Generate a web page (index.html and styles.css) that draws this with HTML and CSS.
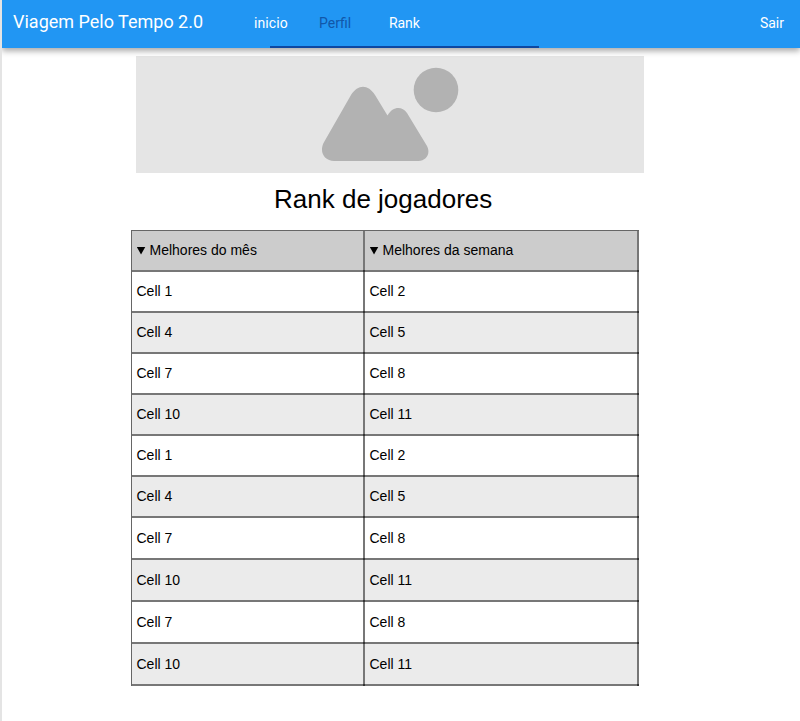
FILE: index.html
```html
<!DOCTYPE html>
<html lang="pt-BR">
<head>
<meta charset="utf-8">
<title>Viagem Pelo Tempo 2.0</title>
<link rel="stylesheet" href="styles.css">
</head>
<body>
<header class="navbar">
  <a class="brand">Viagem Pelo Tempo 2.0</a>
  <nav class="tabs">
    <a class="tab tab-home">inicio</a>
    <a class="tab tab-profile">Perfil</a>
    <a class="tab tab-rank">Rank</a>
    <span class="indicator"></span>
  </nav>
  <a class="tab logout">Sair</a>
</header>
<main class="content">
  <div class="banner">
    <svg class="picture" width="140" height="96" viewBox="0 0 140 96" fill="#b2b2b2">
      <circle cx="116" cy="24" r="22.3"/>
      <path d="M31 29C38 18 48 18 55 29L67.500 49.500C73 40 82 40 87 47L107 80C111 88 106 95 98.500 95H14C5 95-1 87 3.500 77Z"/>
    </svg>
  </div>
  <h1 class="title">Rank de jogadores</h1>
  <table class="ranking">
    <thead>
      <tr><th><div class="head"><i class="arrow"></i><span>Melhores do mês</span></div></th><th><div class="head"><i class="arrow"></i><span>Melhores da semana</span></div></th></tr>
    </thead>
    <tbody>
      <tr><td>Cell 1</td><td>Cell 2</td></tr>
      <tr><td>Cell 4</td><td>Cell 5</td></tr>
      <tr><td>Cell 7</td><td>Cell 8</td></tr>
      <tr><td>Cell 10</td><td>Cell 11</td></tr>
      <tr><td>Cell 1</td><td>Cell 2</td></tr>
      <tr><td>Cell 4</td><td>Cell 5</td></tr>
      <tr class="tall"><td>Cell 7</td><td>Cell 8</td></tr>
      <tr class="tall"><td>Cell 10</td><td>Cell 11</td></tr>
      <tr class="tall"><td>Cell 7</td><td>Cell 8</td></tr>
      <tr class="tall"><td>Cell 10</td><td>Cell 11</td></tr>
    </tbody>
  </table>
</main>
</body>
</html>
```
FILE: styles.css
```css
* { box-sizing: border-box; }
body {
  margin: 0;
  height: 721px;
  overflow: hidden;
  border-left: 2px solid #e4e4e4;
  background: #fff;
  color: #000;
  font-family: "Liberation Sans", Arial, sans-serif;
}
.navbar {
  position: relative;
  display: flex;
  height: 48px;
  padding: 0 16px 0 11px;
  background: #2196f3;
  color: #fff;
  font-family: Roboto, sans-serif;
  box-shadow: 0 3px 6px rgba(0, 0, 0, .34);
}
.brand {
  width: 241px;
  font-size: 18px;
  line-height: 43px;
  white-space: nowrap;
}
.tabs { position: relative; display: flex; width: 300px; }
.tab { font-size: 14px; line-height: 46px; white-space: nowrap; }
.tab-home { width: 65px; letter-spacing: .1px; }
.tab-profile { width: 70px; color: #1157a8; }
.tab-rank { letter-spacing: -.1px; }
.logout { margin-left: auto; }
.indicator {
  position: absolute;
  left: 16px;
  bottom: 0;
  width: 269px;
  height: 2px;
  background: #0d47a1;
}
.content { width: 508px; margin-left: 129px; padding-top: 8px; }
.banner {
  display: flex;
  width: 508px;
  height: 117px;
  margin-left: 5px;
  padding: 10px 0 0 184px;
  background: #e5e5e5;
}
.picture { display: block; }
.title {
  margin: 0 0 0 143px;
  height: 57px;
  font-size: 26px;
  font-weight: 400;
  line-height: 53px;
  white-space: nowrap;
}
.ranking {
  width: 508px;
  border-collapse: separate;
  border-spacing: 0;
  border-top: 1px solid #666;
  border-left: 1px solid #666;
  table-layout: fixed;
  font-size: 14px;
}
th, td {
  position: relative;
  height: 41px;
  padding: 0 4.5px 2px;
  border-right: 2px solid #777;
  border-bottom: 2px solid #777;
  font-weight: 400;
  text-align: left;
  line-height: 16px;
}
th:first-child { width: 233px; }
th { background: #ccc; }
tbody tr:nth-child(even) { background: #ebebeb; }
.tall td { height: 42px; padding-bottom: 0; }
th::after, td::after {
  content: "";
  position: absolute;
  right: -2px;
  bottom: -2px;
  width: 2px;
  height: 2px;
  background: #333;
}
.head { display: flex; align-items: center; }
.arrow {
  width: 9px;
  height: 8px;
  margin: 2px 4px 0 0;
  background: #000;
  clip-path: polygon(0 0, 100% 0, 50% 100%);
}
```
